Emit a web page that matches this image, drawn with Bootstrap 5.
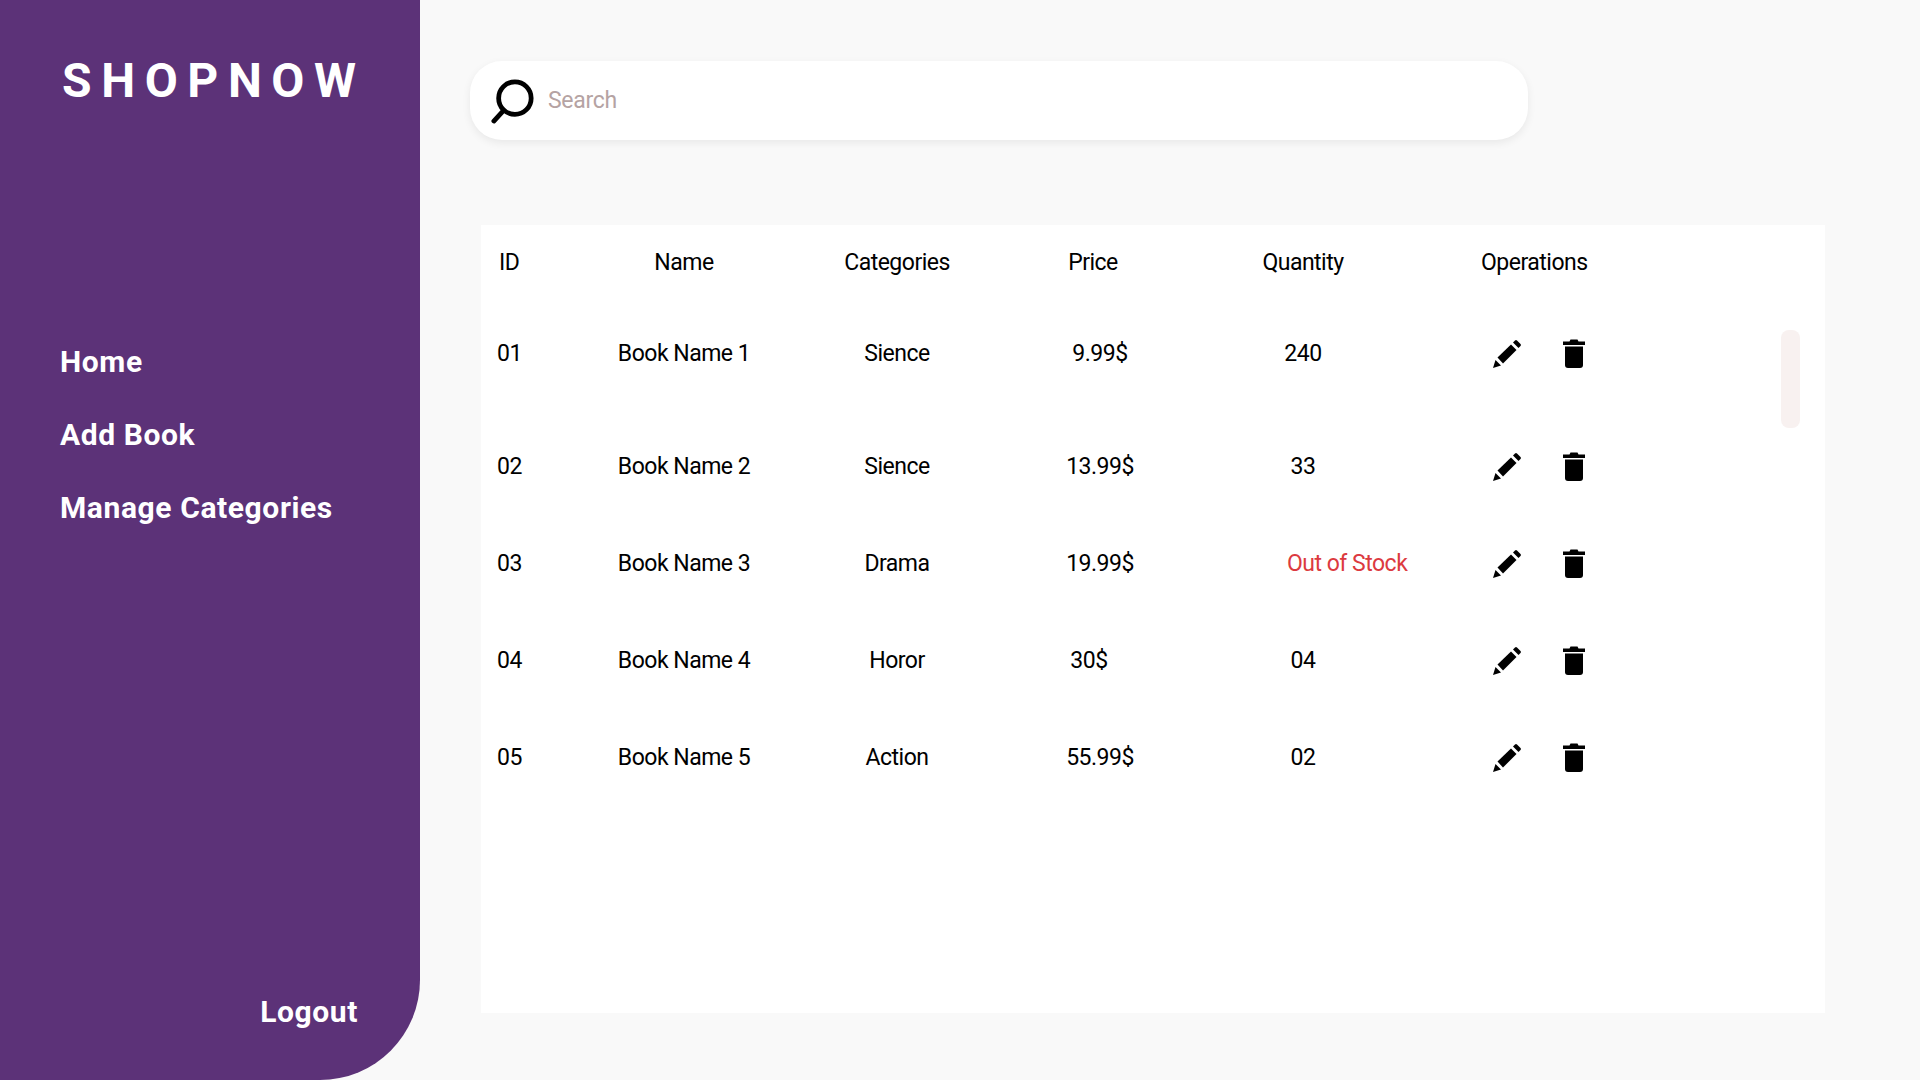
<!DOCTYPE html>
<html lang="en">
<head>
  <meta charset="UTF-8">
  <title>ShopNow - Manage Books</title>
  <link href="https://cdn.jsdelivr.net/npm/bootstrap@5.3.3/dist/css/bootstrap.min.css" rel="stylesheet">
  <style>
    body {
      font-family: Roboto, "Liberation Sans", sans-serif;
      background-color: #f9f9f9;
      color: #000;
    }
    .page-wrap {
      width: 1920px;
      height: 1080px;
      overflow: hidden;
    }
    .side-panel {
      width: 420px;
      height: 1080px;
      background-color: #5c3278;
      border-bottom-right-radius: 100px;
      padding: 52px 62px 49px 60px;
      color: #fff;
    }
    .brand-title {
      font-size: 48px;
      font-weight: 700;
      letter-spacing: 9.6px;
      line-height: 58px;
      margin: 0 0 0 2px;
    }
    .side-menu {
      margin-top: 233px;
      gap: 35px;
    }
    .side-link {
      color: #fff;
      font-size: 30px;
      font-weight: 700;
      line-height: 38px;
      letter-spacing: .6px;
      text-decoration: none;
    }
    .search-box {
      width: 1058px;
      height: 79px;
      margin: 61px 0 0 50px;
      padding-left: 20px;
      background: #fff;
      border-radius: 32px;
      box-shadow: 0 3px 8px rgba(0, 0, 0, .07);
    }
    .search-box input {
      border: 0;
      outline: 0;
      padding: 2px 0 0 13px;
      font-size: 23px;
      letter-spacing: -.3px;
      background: transparent;
      box-shadow: none;
    }
    .search-box input::placeholder {
      color: #b5a3a3;
      opacity: 1;
    }
    .search-icon { margin-left: 1px; }
    .table-panel {
      width: 1344px;
      height: 788px;
      margin: 85px 0 0 61px;
      background: #fff;
    }
    .book-table {
      --bs-table-color: #000;
      table-layout: fixed;
      width: 1250px;
      margin: 0;
      font-size: 23px;
      letter-spacing: -.5px;
    }
    .book-table th, .book-table td {
      border: 0;
      padding: 2px 0 0;
      font-weight: 400;
      text-align: center;
      vertical-align: middle;
      white-space: nowrap;
      background: transparent;
    }
    .book-table thead tr { height: 75px; }
    .book-table tbody tr { height: 97px; }
    .book-table tbody tr.first-row { height: 118px; }
    .book-table tbody tr.first-row td { padding-bottom: 12px; }
    .book-table th:first-child { text-align: left; padding-left: 18px; }
    .book-table td:first-child { text-align: left; padding-left: 16px; }
    .book-table th:last-child { text-align: left; padding-left: 68px; }
    .book-table td:last-child { text-align: left; padding-left: 80px; padding-top: 0; }
    .price-head { padding-right: 14px !important; }
    .price-short { padding-right: 22px !important; }
    .stock-out {
      color: #dc3a40 !important;
      text-align: left !important;
      padding-left: 94px !important;
    }
    .op-icons { gap: 42px; }
    .op-icons svg:first-child { margin-top: 1px; }
    .scroll-thumb {
      position: absolute;
      top: 105px;
      right: 25px;
      width: 19px;
      height: 98px;
      border-radius: 8px;
      background: #f8f1f0;
    }
  </style>
</head>
<body>

<div class="page-wrap d-flex">
  <aside class="side-panel d-flex flex-column">
    <h1 class="brand-title">SHOPNOW</h1>
    <nav class="side-menu d-flex flex-column">
      <a class="side-link" href="#">Home</a>
      <a class="side-link" href="#">Add Book</a>
      <a class="side-link" href="#">Manage Categories</a>
    </nav>
    <div class="mt-auto text-end">
      <a class="side-link" href="#">Logout</a>
    </div>
  </aside>

  <main class="flex-grow-1">
    <div class="search-box d-flex align-items-center">
      <svg class="search-icon" width="46" height="46" viewBox="0 0 46 46" fill="none" stroke="#000" stroke-linecap="round">
        <circle cx="25" cy="20" r="17" stroke-width="5"/>
        <path d="M13 33 3 44" stroke-width="5"/>
      </svg>
      <input type="text" class="form-control" placeholder="Search">
    </div>

    <div class="table-panel position-relative">
      <table class="table book-table">
        <colgroup>
          <col style="width:100px">
          <col style="width:206px">
          <col style="width:220px">
          <col style="width:186px">
          <col style="width:220px">
          <col>
        </colgroup>
        <thead>
          <tr>
            <th>ID</th>
            <th>Name</th>
            <th>Categories</th>
            <th class="price-head">Price</th>
            <th>Quantity</th>
            <th>Operations</th>
          </tr>
        </thead>
        <tbody id="bookRows"></tbody>
      </table>
      <div class="scroll-thumb"></div>
    </div>
  </main>
</div>

<script>
const books = [
  { id: "01", name: "Book Name 1", category: "Sience", price: "9.99$", qty: "240" },
  { id: "02", name: "Book Name 2", category: "Sience", price: "13.99$", qty: "33" },
  { id: "03", name: "Book Name 3", category: "Drama", price: "19.99$", qty: "Out of Stock" },
  { id: "04", name: "Book Name 4", category: "Horor", price: "30$", qty: "04" },
  { id: "05", name: "Book Name 5", category: "Action", price: "55.99$", qty: "02" }
];

const pencil = `<svg width="28" height="28" viewBox="0 0 28 28" fill="#000"><path d="M0 28 2.500 20 8 25.500Z"/><path d="M4.500 17.500 18 4.500 23.500 10 10 23.500Z"/><path d="M20 2.500 22 .5Q23 -.3 24 .5L27.500 4Q28.300 5 27.500 6L25.500 8Z"/></svg>`;
const trash = `<svg width="22" height="29" viewBox="0 0 22 29" fill="#000"><path d="M0 2.500H6.500L7.500 .5H14.500L15.500 2.500H22V6H0Z"/><path d="M2 7.500H20V26Q20 29 17 29H5Q2 29 2 26Z"/></svg>`;

document.getElementById("bookRows").innerHTML = books.map((b, i) => `
  <tr class="${i === 0 ? "first-row" : ""}">
    <td>${b.id}</td>
    <td>${b.name}</td>
    <td>${b.category}</td>
    <td class="${b.price === "30$" ? "price-short" : ""}">${b.price}</td>
    <td class="${b.qty === "Out of Stock" ? "stock-out" : ""}">${b.qty}</td>
    <td><div class="d-flex op-icons">${pencil}${trash}</div></td>
  </tr>`).join("");
</script>

<script src="https://cdn.jsdelivr.net/npm/bootstrap@5.3.3/dist/js/bootstrap.bundle.min.js"></script>
</body>
</html>
